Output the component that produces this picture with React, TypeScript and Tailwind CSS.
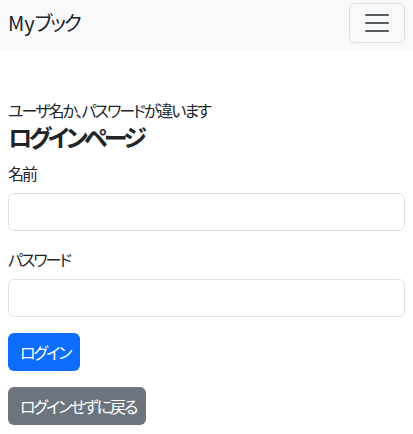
import React from "react";

export default function App() {
  const font = { fontFamily: '"Noto Sans CJK JP", "Noto Sans", sans-serif' };
  return (
    <div className="w-[413px] h-[434px] bg-white text-[#212529] [font-feature-settings:'palt'] tracking-[-0.125em]" style={font}>
      <nav className="h-[50px] bg-[#f8f9fa] flex items-start justify-between px-2 pt-[3px]">
        <div className="h-[40px] flex items-center text-[20px]">
          <span className="tracking-normal">My</span>
          <span>ブック</span>
        </div>
        <button className="w-[56px] h-[40px] border border-[rgba(0,0,0,0.1)] rounded-[6px] flex items-center justify-center">
          <svg width="30" height="30" viewBox="0 0 30 30">
            <path d="M4 7h22M4 15h22M4 23h22" stroke="rgba(33,37,41,0.75)" strokeWidth="2" strokeLinecap="round" strokeMiterlimit="10" />
          </svg>
        </button>
      </nav>
      <div className="px-2 pt-[48px]">
        <div className="text-[16px] leading-[24px]">ユーザ名か、パスワードが違います</div>
        <h4 className="text-[24px] leading-[29px] font-bold mb-[10px] tracking-[-0.15em]">ログインページ</h4>
        <div className="mb-4">
          <label className="block text-[16px] leading-[24px] mb-2">名前</label>
          <input type="text" className="block w-full h-[38px] border border-[#dee2e6] rounded-[6px] px-3" />
        </div>
        <div className="mb-4">
          <label className="block text-[16px] leading-[24px] mb-2">パスワード</label>
          <input type="password" className="block w-full h-[38px] border border-[#dee2e6] rounded-[6px] px-3" />
        </div>
        <div className="flex flex-col items-start gap-4">
          <button className="h-[38px] pl-3 pr-[10px] rounded-[6px] bg-[#0d6efd] text-white text-[16px]">ログイン</button>
          <button className="h-[38px] pl-3 pr-[10px] rounded-[6px] bg-[#6c757d] text-white text-[16px]">ログインせずに戻る</button>
        </div>
      </div>
    </div>
  );
}
